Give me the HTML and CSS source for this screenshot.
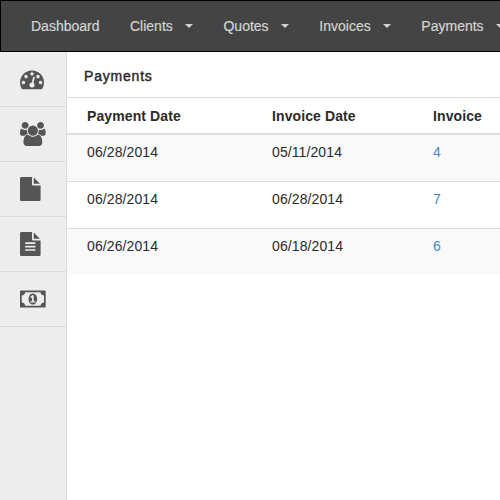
FILE: index.html
```
<!DOCTYPE html>
<html lang="en">
<head>
<meta charset="utf-8">
<title>Payments</title>
<link rel="stylesheet" href="styles.css">
</head>
<body>
<nav class="navbar">
  <a class="nav-link">Dashboard</a>
  <a class="nav-link">Clients<i class="caret"></i></a>
  <a class="nav-link">Quotes<i class="caret"></i></a>
  <a class="nav-link">Invoices<i class="caret"></i></a>
  <a class="nav-link">Payments<i class="caret"></i></a>
</nav>
<div class="layout">
  <aside class="sidebar">
    <a class="side-link"><svg width="24" height="24" viewBox="0 0 1792 1792"><path d="M384 1152q0-53-37.5-90.5t-90.5-37.5-90.5 37.5-37.5 90.5 37.5 90.5 90.5 37.5 90.5-37.5 37.5-90.5zm192-448q0-53-37.5-90.5t-90.5-37.5-90.5 37.5-37.5 90.5 37.5 90.5 90.5 37.5 90.5-37.5 37.5-90.5zm428 481l101-382q6-26-7.5-48.5t-38.5-29.5-48 6.5-30 39.5l-101 382q-60 5-107 43.5t-63 98.5q-20 77 20 146t117 89 146-20 89-117q16-60-6-117t-72-91zm660-33q0-53-37.5-90.5t-90.5-37.5-90.5 37.5-37.5 90.5 37.5 90.5 90.5 37.5 90.5-37.5 37.5-90.5zm-640-640q0-53-37.5-90.5t-90.5-37.5-90.5 37.5-37.5 90.5 37.5 90.5 90.5 37.5 90.5-37.5 37.5-90.5zm448 192q0-53-37.5-90.5t-90.5-37.5-90.5 37.5-37.5 90.5 37.5 90.5 90.5 37.5 90.5-37.5 37.5-90.5zm320 448q0 261-141 483-19 29-54 29h-1402q-35 0-54-29-141-221-141-483 0-182 71-348t191-286 286-191 348-71 348 71 286 191 191 286 71 348z"/></svg></a>
    <a class="side-link"><svg width="25.7" height="24" viewBox="-64 0 1920 1792"><path d="M529 896q-162 5-265 128h-134q-82 0-138-40.5t-56-118.5q0-353 124-353 6 0 43.5 21t97.5 42.5 119 21.5q67 0 133-23-5 37-5 66 0 139 81 256zm1071 637q0 120-73 189.5t-194 69.5h-874q-121 0-194-69.5t-73-189.5q0-53 3.5-103.5t14-109 26.5-108.5 43-97.5 62-81 85.5-53.5 111.5-20q10 0 43 21.5t73 48 107 48 135 21.5 135-21.5 107-48 73-48 43-21.5q61 0 111.5 20t85.5 53.5 62 81 43 97.5 26.5 108.5 14 109 3.5 103.5zm-1024-1277q0 106-75 181t-181 75-181-75-75-181 75-181 181-75 181 75 75 181zm704 384q0 159-112.5 271.5t-271.5 112.5-271.5-112.5-112.5-271.5 112.5-271.5 271.5-112.5 271.5 112.5 112.5 271.5zm576 225q0 78-56 118.5t-138 40.5h-134q-103-123-265-128 81-117 81-256 0-29-5-66 66 23 133 23 59 0 119-21.5t97.5-42.5 43.5-21q124 0 124 353zm-128-609q0 106-75 181t-181 75-181-75-75-181 75-181 181-75 181 75 75 181z"/></svg></a>
    <a class="side-link"><svg width="20.6" height="24" viewBox="128 0 1536 1792"><path d="M1152 512v-472q22 14 36 28l408 408q14 14 28 36h-472zm-128 32q0 40 28 68t68 28h544v1056q0 40-28 68t-68 28h-1344q-40 0-68-28t-28-68v-1600q0-40 28-68t68-28h800v544z"/></svg></a>
    <a class="side-link"><svg width="20.6" height="24" viewBox="128 0 1536 1792"><path d="M1596 476q14 14 28 36h-472v-472q22 14 36 28zm-476 164h544v1056q0 40-28 68t-68 28h-1344q-40 0-68-28t-28-68v-1600q0-40 28-68t68-28h800v544q0 40 28 68t68 28zm160 736v-64q0-14-9-23t-23-9h-704q-14 0-23 9t-9 23v64q0 14 9 23t23 9h704q14 0 23-9t9-23zm0-256v-64q0-14-9-23t-23-9h-704q-14 0-23 9t-9 23v64q0 14 9 23t23 9h704q14 0 23-9t9-23zm0-256v-64q0-14-9-23t-23-9h-704q-14 0-23 9t-9 23v64q0 14 9 23t23 9h704q14 0 23-9t9-23z"/></svg></a>
    <a class="side-link"><svg width="25.7" height="24" viewBox="0 0 1920 1792"><path d="M768 1152h384v-96h-128v-448h-114l-148 137 77 80q42-37 55-57h2v288h-128v96zm512-256q0 70-21 142t-59.5 134-101.5 101-138 39-138-39-101.5-101-59.5-134-21-142 21-142 59.5-134 101.5-101 138-39 138 39 101.5 101 59.5 134 21 142zm512 256v-512q-106 0-181-75t-75-181h-1152q0 106-75 181t-181 75v512q106 0 181 75t75 181h1152q0-106 75-181t181-75zm128-832v1152q0 26-19 45t-45 19h-1792q-26 0-45-19t-19-45v-1152q0-26 19-45t45-19h1792q26 0 45 19t19 45z"/></svg></a>
  </aside>
  <main class="content">
    <h1 class="title">Payments</h1>
    <div class="row head"><span>Payment Date</span><span>Invoice Date</span><span>Invoice</span></div>
    <div class="row odd"><span>06/28/2014</span><span>05/11/2014</span><a class="link">4</a></div>
    <div class="row even"><span>06/28/2014</span><span>06/28/2014</span><a class="link">7</a></div>
    <div class="row odd"><span>06/26/2014</span><span>06/18/2014</span><a class="link">6</a></div>
  </main>
</div>
</body>
</html>
```
FILE: styles.css
```
* { box-sizing: border-box; }
body {
  margin: 0;
  height: 500px;
  overflow: hidden;
  display: flex;
  flex-direction: column;
  background: #fff;
  color: #2b2b2b;
  font: 14px/20px "Liberation Sans", Arial, sans-serif;
}
.navbar {
  flex: none;
  display: flex;
  height: 52px;
  padding: 15px 0 0 15px;
  overflow: hidden;
  background: #444;
  border: 1px solid #000;
  border-right: 0;
  color: #d3d3d3;
  -webkit-text-stroke: 0.2px #d3d3d3;
}
.nav-link {
  flex: none;
  display: flex;
  padding: 0 15.5px 0 15px;
}
.caret {
  margin: 8px 0 0 12.2px;
  border: 4.5px solid transparent;
  border-width: 4px 4px 0;
  border-top-color: #d3d3d3;
  height: 4px;
}
.layout { flex: 1; display: flex; }
.sidebar {
  flex: none;
  width: 67px;
  background: #ededed;
  border-right: 1px solid #dbdbdb;
}
.side-link {
  display: block;
  height: 55px;
  padding: 15.3px 0 0 20px;
  border-bottom: 1px solid #dbdbdb;
}
.side-link svg { display: block; fill: #555; }
.content { flex: 1; min-width: 0; }
.title {
  height: 46px;
  margin: 0;
  padding: 14px 17px 0;
  border-bottom: 1px solid #ddd;
  font-size: 14px;
  line-height: 20px;
  font-weight: 400;
  letter-spacing: 0.8px;
  -webkit-text-stroke: 0.45px #2b2b2b;
}
.row {
  display: grid;
  grid-template-columns: 185px 161px 1fr;
  height: 47px;
  padding: 7px 0 0 20px;
  border-bottom: 1px solid #ddd;
  letter-spacing: 0.1px;
}
.row:last-child { height: 46px; border-bottom: 0; }
.head {
  height: 37px;
  padding-top: 8px;
  border-bottom: 2px solid #ddd;
  font-weight: 700;
}
.odd { background: #f9f9f9; }
.link { color: #428bca; }
```
